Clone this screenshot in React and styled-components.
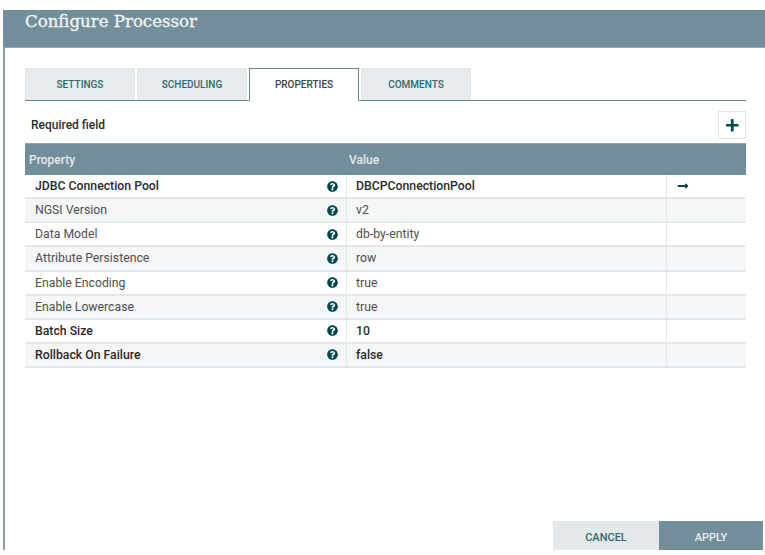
import React from 'react';
import styled, { createGlobalStyle } from 'styled-components';
import { FaQuestionCircle, FaPlus, FaLongArrowAltRight } from 'react-icons/fa';

const rows = [
  { name: 'JDBC Connection Pool', value: 'DBCPConnectionPool', required: true, link: true },
  { name: 'NGSI Version', value: 'v2' },
  { name: 'Data Model', value: 'db-by-entity' },
  { name: 'Attribute Persistence', value: 'row' },
  { name: 'Enable Encoding', value: 'true' },
  { name: 'Enable Lowercase', value: 'true' },
  { name: 'Batch Size', value: '10', required: true },
  { name: 'Rollback On Failure', value: 'false', required: true },
];

const tabs = ['SETTINGS', 'SCHEDULING', 'PROPERTIES', 'COMMENTS'];

const App = () => {
  return (
    <>
      <GlobalStyle />
      <Dialog>
        <Header>
          <Title>Configure Processor</Title>
        </Header>
        <Body>
          <Tabs>
            {tabs.map((tab) => (
              <Tab key={tab} $active={tab === 'PROPERTIES'}>
                {tab}
              </Tab>
            ))}
          </Tabs>
          <Toolbar>
            <RequiredLabel>Required field</RequiredLabel>
            <AddButton aria-label="Add property">
              <FaPlus />
            </AddButton>
          </Toolbar>
          <Table>
            <HeadRow>
              <HeadCell>Property</HeadCell>
              <HeadCell $tight>Value</HeadCell>
              <span />
            </HeadRow>
            {rows.map((row, i) => (
              <Row key={row.name} $odd={i % 2 === 1} $required={row.required}>
                <NameCell>
                  {row.name}
                  <HelpIcon />
                </NameCell>
                <ValueCell>{row.value}</ValueCell>
                <ActionCell>{row.link && <LinkIcon />}</ActionCell>
              </Row>
            ))}
          </Table>
        </Body>
        <Footer>
          <CancelButton>CANCEL</CancelButton>
          <ApplyButton>APPLY</ApplyButton>
        </Footer>
      </Dialog>
    </>
  );
};

const GlobalStyle = createGlobalStyle`
  html, body {
    margin: 0;
    background: #fff;
  }
  body {
    font-family: Roboto, "Liberation Sans", sans-serif;
  }
`;

const Dialog = styled.div`
  box-sizing: border-box;
  width: 762px;
  height: 540px;
  margin: 10px 0 0 3px;
  border-left: 2px solid #8d9ea8;
  display: flex;
  flex-direction: column;
`;

const Header = styled.div`
  box-sizing: border-box;
  height: 38px;
  margin-left: -2px;
  padding-left: 22px;
  background: #728e9b;
  border-bottom: 1px solid #8fa5af;
`;

const Title = styled.div`
  font-family: "DejaVu Serif", serif;
  font-size: 16.6px;
  font-weight: 400;
  line-height: 24px;
  color: #f3f6f7;
  -webkit-text-stroke: 0.3px #f3f6f7;
`;

const Body = styled.div`
  flex: 1;
  padding: 20px 19px 0 20px;
`;

const Tabs = styled.div`
  box-sizing: border-box;
  display: flex;
  gap: 2px;
  height: 33px;
  border-bottom: 1px solid #5f8a88;
`;

const Tab = styled.div`
  box-sizing: border-box;
  width: 110px;
  height: ${(p) => (p.$active ? '33px' : '32px')};
  display: flex;
  align-items: center;
  justify-content: center;
  font-size: 10px;
  font-weight: 500;
  background: ${(p) => (p.$active ? '#fff' : '#e8ecee')};
  color: ${(p) => (p.$active ? '#444' : '#2e6b69')};
  border: 1px solid ${(p) => (p.$active ? '#5f8a88' : '#e0e6e9')};
  border-bottom: ${(p) => (p.$active ? '1px solid #fff' : 'none')};
`;

const Toolbar = styled.div`
  display: flex;
  align-items: center;
  justify-content: space-between;
  height: 28px;
  margin-top: 10px;
  padding-left: 6px;
`;

const RequiredLabel = styled.div`
  font-size: 12px;
  font-weight: 500;
  color: #2d2d2d;
`;

const AddButton = styled.button`
  box-sizing: border-box;
  width: 28px;
  height: 28px;
  padding: 1px 0 0;
  display: flex;
  align-items: center;
  justify-content: center;
  background: #fff;
  border: 1px solid #dfe5e8;
  color: #004849;
  font-size: 14.5px;
`;

const Table = styled.div`
  margin-top: 4px;
`;

const gridColumns = `
  display: grid;
  grid-template-columns: 321px 320px 80px;
`;

const HeadRow = styled.div`
  ${gridColumns}
  height: 32px;
  align-items: center;
  background: #728e9b;
  border-top: 1px solid #8fa5af;
  box-sizing: border-box;
`;

const HeadCell = styled.div`
  padding-left: ${(p) => (p.$tight ? '3px' : '4px')};
  font-size: 12px;
  font-weight: 500;
  color: #e4eaed;
`;

const Row = styled.div`
  ${gridColumns}
  box-sizing: border-box;
  height: 24.14px;
  background: ${(p) => (p.$odd ? '#f4f6f7' : '#fff')};
  border-bottom: 2px solid #e3e8eb;
  font-size: 12.25px;
  font-weight: ${(p) => (p.$required ? 500 : 400)};
  color: ${(p) => (p.$required ? '#2a2a2a' : '#4f4f4f')};
`;

const NameCell = styled.div`
  display: flex;
  align-items: center;
  justify-content: space-between;
  padding: 0 8px 0 10px;
`;

const ValueCell = styled.div`
  display: flex;
  align-items: center;
  padding-left: 9px;
  border-left: 1px solid #e3e8eb;
`;

const ActionCell = styled.div`
  display: flex;
  align-items: center;
  padding-left: 10px;
  border-left: 1px solid #e3e8eb;
`;

const HelpIcon = styled(FaQuestionCircle)`
  width: 11px;
  height: 11px;
  color: #004849;
`;

const LinkIcon = styled(FaLongArrowAltRight)`
  width: 12px;
  height: 12px;
  color: #004849;
`;

const Footer = styled.div`
  display: flex;
  justify-content: flex-end;
  padding-right: 2px;
`;

const FooterButton = styled.button`
  height: 29px;
  padding: 3px 0 0;
  border: none;
  font-family: inherit;
  font-size: 11px;
  font-weight: 500;
`;

const CancelButton = styled(FooterButton)`
  width: 106px;
  background: #e3e8eb;
  color: #2e6b69;
`;

const ApplyButton = styled(FooterButton)`
  width: 104px;
  background: #728e9b;
  color: #e9eef0;
`;

export default App;
